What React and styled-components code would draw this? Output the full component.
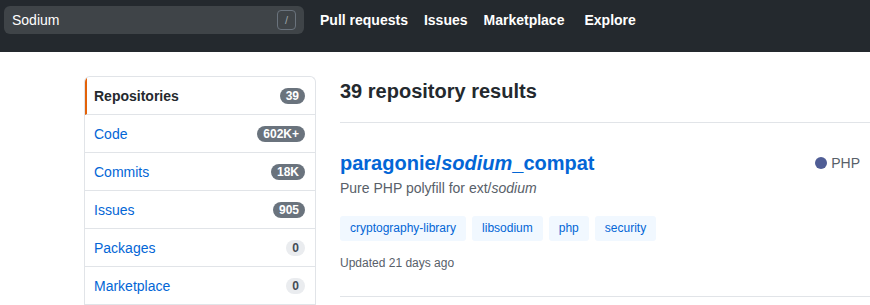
import styled, { createGlobalStyle } from 'styled-components';

const GlobalStyle = createGlobalStyle`
	html, body {
		margin: 0;
		padding: 0;
		background: #fff;
		overflow: hidden;
	}
	body {
		font-family: 'Liberation Sans', Arial, sans-serif;
		font-size: 14px;
		color: #24292e;
	}
`;

const Header = styled.header`
	background: #24292e;
	height: 52px;
	box-sizing: border-box;
	padding: 6px 4px 18px;
	display: flex;
	align-items: center;
`;

const Search = styled.div`
	width: 300px;
	height: 28px;
	box-sizing: border-box;
	border-radius: 6px;
	background: #3f4448;
	display: flex;
	align-items: center;
	justify-content: space-between;
	padding: 0 8px 0 8px;
	color: #fff;
	font-size: 14px;
`;

const Kbd = styled.span`
	width: 19px;
	height: 20px;
	box-sizing: border-box;
	border: 1px solid #6a737d;
	border-radius: 4px;
	color: #9ea4aa;
	font-size: 11px;
	display: flex;
	align-items: center;
	justify-content: center;
`;

const Nav = styled.nav`
	display: flex;
	gap: 16px;
	margin-left: 16px;
`;

const NavLink = styled.a`
	color: #fff;
	font-weight: bold;
	font-size: 14px;
	text-decoration: none;
	margin-left: ${p => p.extra ? '4px' : '0'};
`;

const Page = styled.div`
	display: flex;
	gap: 24px;
	padding: 24px 0 0 84px;
`;

const Sidebar = styled.div`
	width: 232px;
	box-sizing: border-box;
	flex-shrink: 0;
	border: 1px solid #e1e4e8;
	border-radius: 6px 6px 0 0;
	border-bottom: none;
	align-self: flex-start;
	overflow: hidden;
`;

const Item = styled.a`
	display: flex;
	align-items: center;
	justify-content: space-between;
	height: 38px;
	box-sizing: border-box;
	padding: 0 10px 0 ${p => p.selected ? '7px' : '9px'};
	border-bottom: 1px solid #e1e4e8;
	border-left: ${p => p.selected ? '2px solid #e36209' : 'none'};
	color: ${p => p.selected ? '#24292e' : '#0366d6'};
	font-weight: ${p => p.selected ? 'bold' : 'normal'};
	font-size: 14px;
	text-decoration: none;
`;

const Counter = styled.span`
	font-size: 12px;
	font-weight: bold;
	line-height: 16px;
	padding: 0 6px;
	border-radius: 2em;
	background: ${p => p.empty ? '#eaecef' : '#6a737d'};
	color: ${p => p.empty ? '#444d56' : '#fff'};
`;

const Main = styled.main`
	flex: 1;
	min-width: 0;
`;

const Title = styled.h3`
	margin: 0;
	font-size: 20px;
	line-height: 30px;
	font-weight: bold;
	padding-bottom: 16px;
	border-bottom: 1px solid #e1e4e8;
`;

const Repo = styled.div`
	display: flex;
	padding: 25px 0 24px;
	border-bottom: 1px solid #e1e4e8;
`;

const RepoBody = styled.div`
	flex: 1;
`;

const RepoName = styled.a`
	display: block;
	color: #0366d6;
	font-size: 20px;
	font-weight: bold;
	line-height: 30px;
	text-decoration: none;
`;

const Description = styled.p`
	margin: 0;
	color: #586069;
	font-size: 14px;
	line-height: 20px;
`;

const Topics = styled.div`
	display: flex;
	gap: 6px;
	margin-top: 18px;
`;

const Topic = styled.a`
	display: inline-block;
	background: #f1f8ff;
	color: #0366d6;
	font-size: 12px;
	line-height: 25px;
	padding: 0 10px;
	border-radius: 3px;
	text-decoration: none;
`;

const Updated = styled.div`
	margin-top: 13px;
	color: #586069;
	font-size: 12px;
	line-height: 18px;
`;

const Language = styled.div`
	display: flex;
	align-items: center;
	gap: 4px;
	height: 30px;
	padding-right: 10px;
	color: #586069;
	font-size: 14px;
`;

const LangDot = styled.span`
	width: 12px;
	height: 12px;
	border-radius: 50%;
	background: ${p => p.color};
`;

const sideItems = [
	{ label: 'Repositories', count: '39', selected: true },
	{ label: 'Code', count: '602K+' },
	{ label: 'Commits', count: '18K' },
	{ label: 'Issues', count: '905' },
	{ label: 'Packages', count: '0', empty: true },
	{ label: 'Marketplace', count: '0', empty: true },
];

const topics = ['cryptography-library', 'libsodium', 'php', 'security'];

export default function App() {
	return (
		<>
			<GlobalStyle />
			<Header>
				<Search>
					<span>Sodium</span>
					<Kbd>/</Kbd>
				</Search>
				<Nav>
					<NavLink>Pull requests</NavLink>
					<NavLink>Issues</NavLink>
					<NavLink>Marketplace</NavLink>
					<NavLink extra>Explore</NavLink>
				</Nav>
			</Header>
			<Page>
				<Sidebar>
					{ sideItems.map(item => (
						<Item key={ item.label } selected={ item.selected }>
							{ item.label }
							<Counter empty={ item.empty }>{ item.count }</Counter>
						</Item>
					)) }
				</Sidebar>
				<Main>
					<Title>39 repository results</Title>
					<Repo>
						<RepoBody>
							<RepoName>paragonie/<em>sodium</em>_compat</RepoName>
							<Description>Pure PHP polyfill for ext/<em>sodium</em></Description>
							<Topics>
								{ topics.map(t => <Topic key={ t }>{ t }</Topic>) }
							</Topics>
							<Updated>Updated 21 days ago</Updated>
						</RepoBody>
						<Language>
							<LangDot color="#4F5D95" />
							PHP
						</Language>
					</Repo>
				</Main>
			</Page>
		</>
	);
}
